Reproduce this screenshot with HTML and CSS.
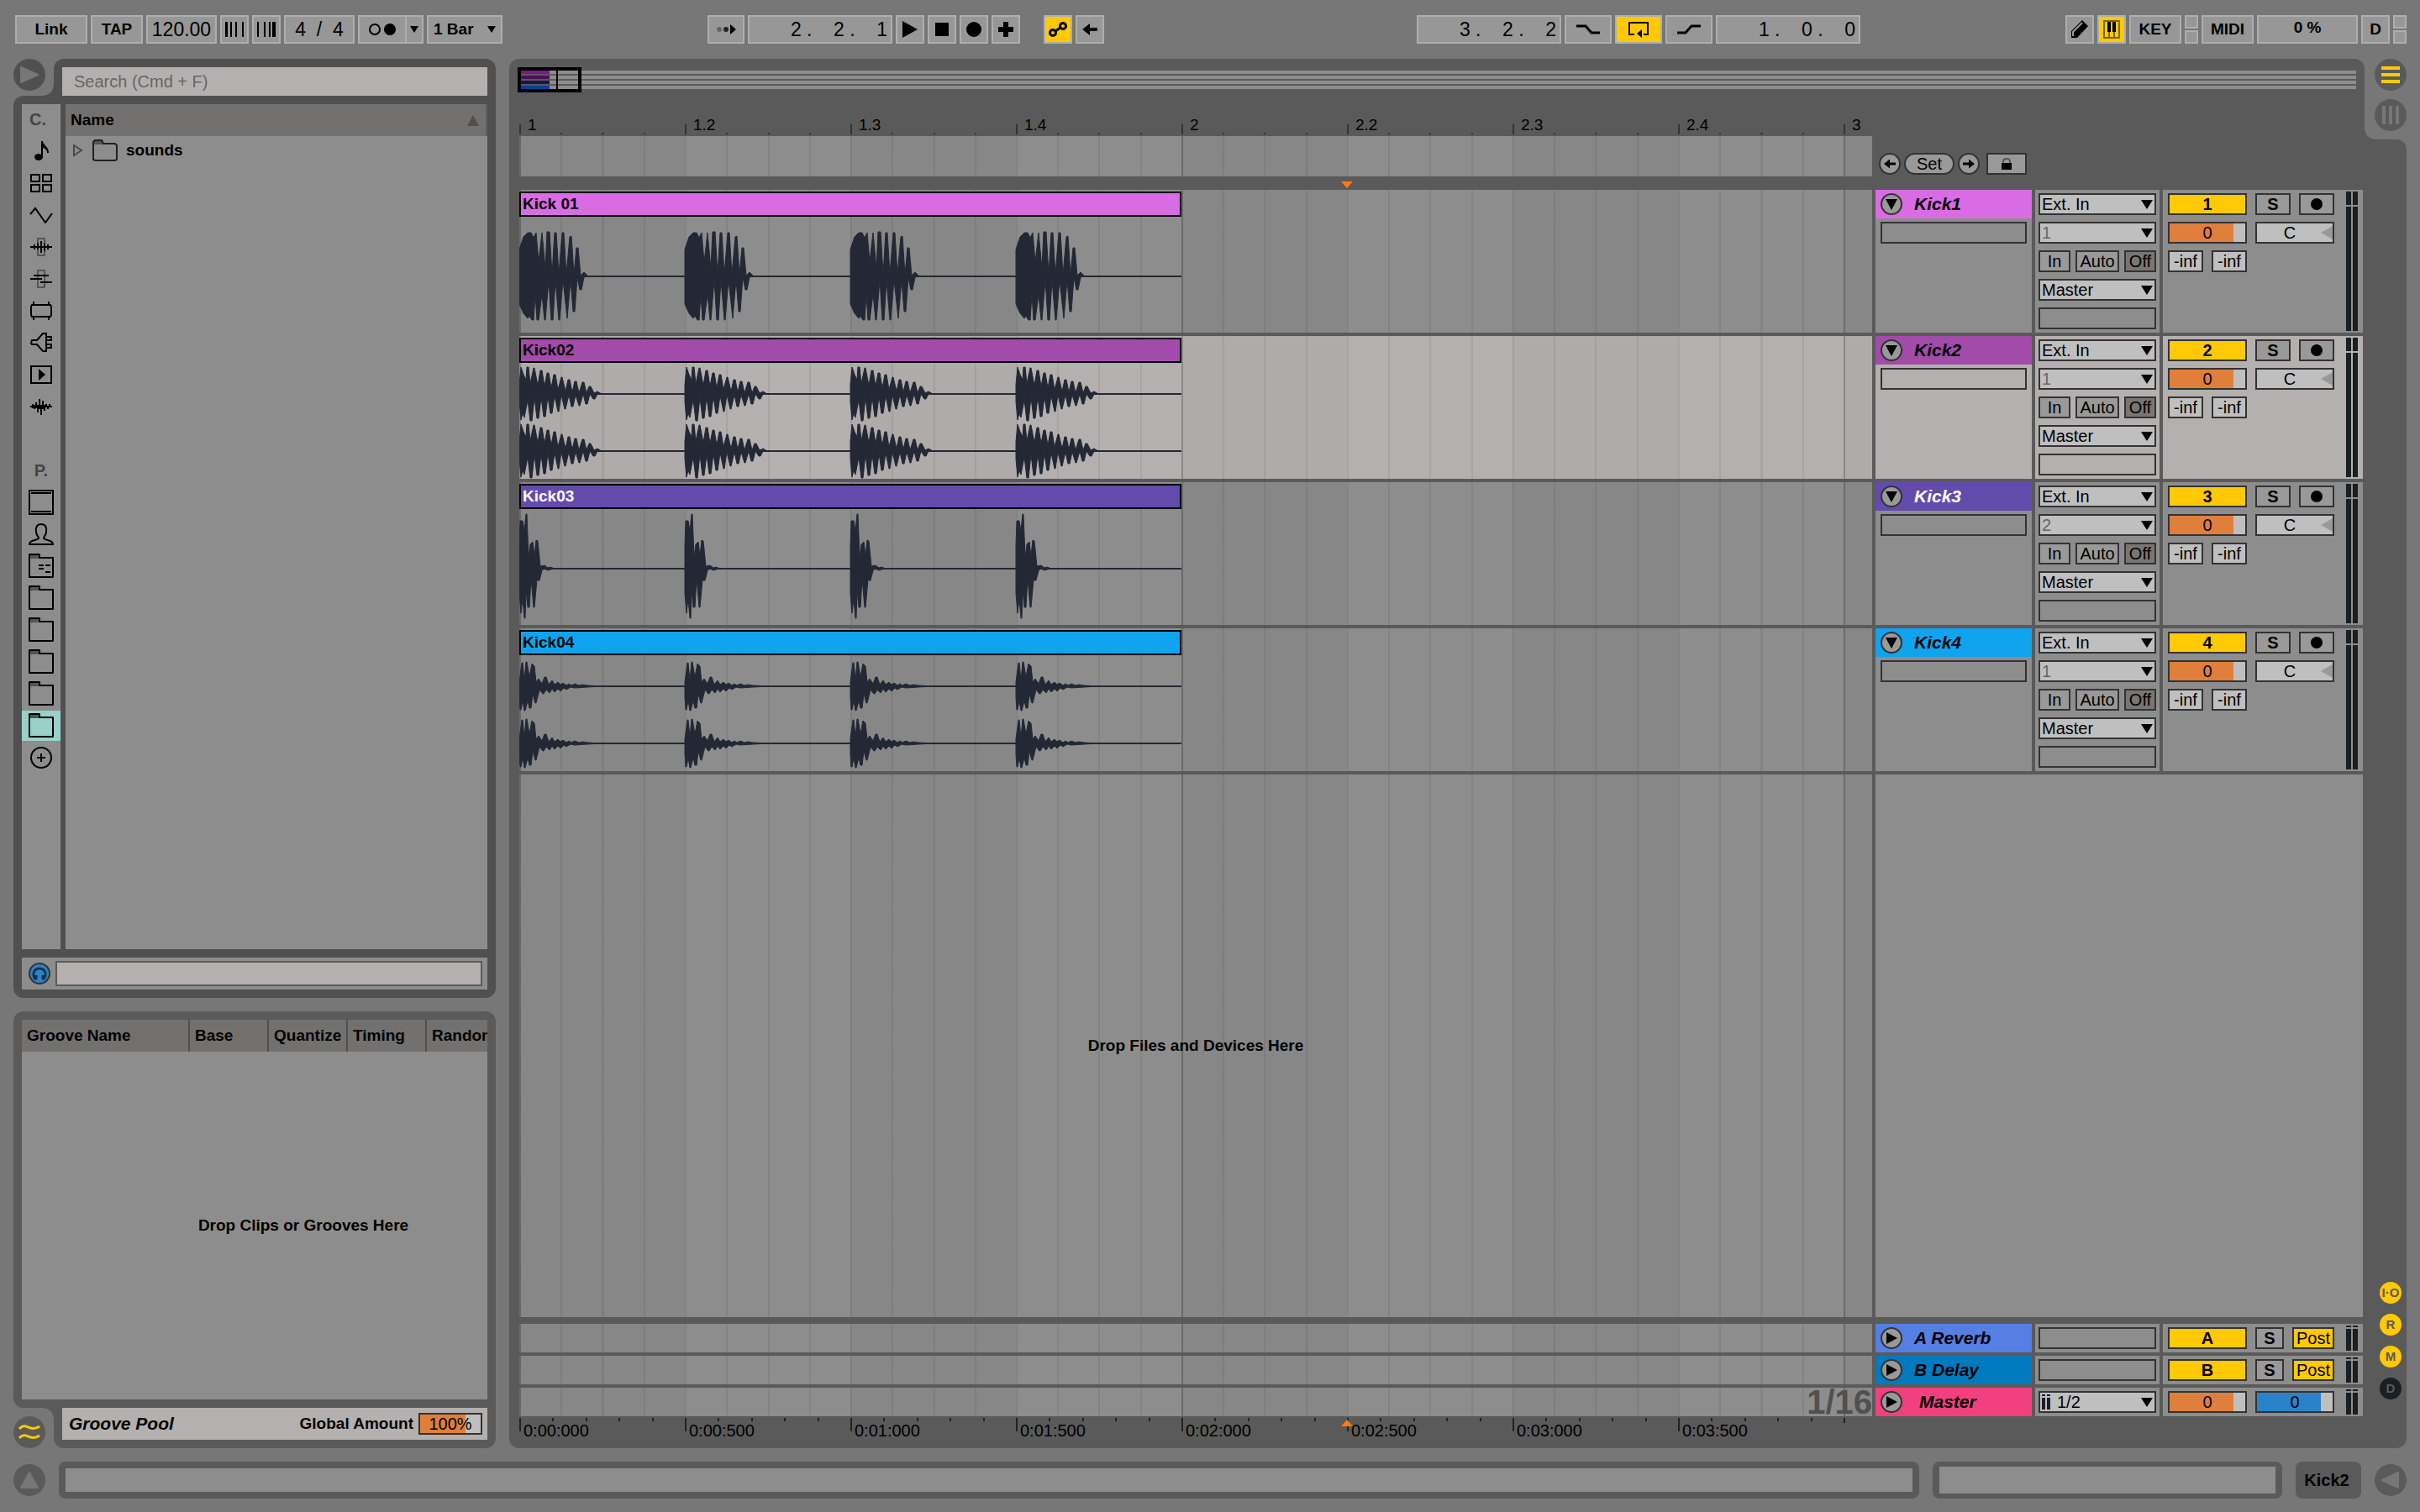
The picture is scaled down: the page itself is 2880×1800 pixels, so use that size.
FILE: index.html
```
<!DOCTYPE html>
<html lang="en">
<head>
    <meta charset="UTF-8">
    <meta name="viewport" content="width=device-width, initial-scale=1.0">
    <title>Arrangement</title>
    <link rel="stylesheet" href="styles.css">
</head>
<body>

<!-- Icons and waveforms -->
<svg class="defs" width="0" height="0" aria-hidden="true">
    <symbol id="folder" viewBox="0 0 30 30">
        <path d="M1 1h12v5H1z" fill="#555"/>
        <path d="M1 28V1h12v4h16v23z" fill="none" stroke="#000" stroke-width="2" stroke-linejoin="round"/>
    </symbol>
    <symbol id="left" viewBox="0 0 18 18">
        <path d="M0 9l9-7v5h9v4H9v5z"/>
    </symbol>
    <symbol id="kick1" viewBox="0 0 197 138" overflow="visible">
        <path d="M0 39L5 24 10 19 14 19 17 25 20 19 23 54 27 19 31 62 33 18 36 18 39 69 42 19 44 19 47 69 51 19 53 19 56 69 60 24 62 23 65 69 68 37 70 37 73 70 77 66 82 71 77 72 74 87 72 87 69 72 66 113 64 113 61 75 57 121 52 75 48 123 47 123 43 75 40 123 38 123 35 75 31 123 30 123 27 92 23 123 21 123 19 92 17 123 15 123 12 118 10 121 5 115 0 104z"/>
    </symbol>
    <symbol id="kick2" viewBox="0 0 197 68" overflow="visible">
        <path d="M0 26L2 5 5 14 8 20 9 5 11 5 13 25 17 6 18 6 22 27 25 9 27 9 30 28 33 12 35 12 38 30 41 14 43 14 46 32 50 17 51 17 55 34 58 20 60 20 63 35 66 22 68 22 71 36 75 23 77 23 80 36 83 28 85 28 89 36 93 34 98 37 93 37 90 43 88 43 84 37 81 49 79 49 76 37 72 51 71 51 67 38 64 52 62 52 59 38 55 55 54 55 50 38 47 58 46 58 42 39 39 60 37 60 34 40 31 64 29 64 26 41 23 66 21 66 18 41 15 69 13 69 10 44 6 65 4 60 2 68 0 46z"/>
    </symbol>
    <symbol id="kick3" viewBox="0 0 197 138" overflow="visible">
        <path d="M0 44L1 14 4 14 6 26 8 6 9 6 11 58 13 42 16 39 18 56 20 37 22 38 25 68 30 67 34 70 37 69 42 71 37 72 34 73 30 71 27 73 24 85 22 85 21 84 18 117 17 117 14 82 12 117 10 117 8 96 7 130 6 130 4 106 2 124 0 100z"/>
    </symbol>
    <symbol id="kick4" viewBox="0 0 197 68" overflow="visible">
        <path d="M0 32L3 9 4 9 6 30 8 8 9 8 12 26 15 10 18 13 20 32 23 28 27 34 30 26 32 26 35 35 39 30 42 35 46 32 49 35 52 33 56 36 59 34 62 36 66 34 71 36 75 35 81 36 99 37 81 38 66 39 61 38 56 41 53 39 49 43 46 40 42 44 39 40 36 45 32 41 29 46 28 46 24 41 20 57 19 57 16 46 14 63 12 63 10 54 7 66 6 66 4 54 2 65 1 65 0 50z"/>
    </symbol>
</svg>

<header class="toolbar">
    <div class="group">
        <button class="tool w86">Link</button>
        <button class="tool w62">TAP</button>
        <input class="tool w84 num center" value="120.00" aria-label="Tempo">
        <button class="tool" aria-label="Nudge down"><svg width="22" height="18"><path d="M0 0h3v18H0zM6 0h2v18H6zM12 0h2v18h-2zM20 0h2v18h-2z"/></svg></button>
        <button class="tool" aria-label="Nudge up"><svg width="22" height="18"><path d="M0 0h2v18H0zM8 0h2v18H8zM14 0h2v18h-2zM18 0h4v18h-4z"/></svg></button>
        <input class="tool w84 num center" value="4  /  4" aria-label="Time signature">
        <div class="split">
            <button class="tool" aria-label="Metronome"><svg width="34" height="18"><circle cx="8" cy="9" r="6" fill="none" stroke="#000" stroke-width="2"/><circle cx="26" cy="9" r="7"/></svg></button>
            <button class="tool w24" aria-label="Metronome settings"><svg width="10" height="8"><path d="M0 0h10L5 8z"/></svg></button>
        </div>
        <select class="tool w90 menu-small" aria-label="Quantization"><option>1 Bar</option></select>
    </div>

    <div class="group middle">
        <div class="group">
            <button class="tool w44" aria-label="Follow"><svg width="24" height="14"><circle cx="4" cy="7" r="3" fill="#666"/><circle cx="12" cy="7" r="3" fill="#222"/><path d="M17 1l7 6-7 6z"/></svg></button>
            <input class="tool w172 num" value="2 .    2 .    1" aria-label="Arrangement position">
            <button class="tool" aria-label="Play"><svg width="18" height="20"><path d="M0 0l18 10L0 20z"/></svg></button>
            <button class="tool" aria-label="Stop"><svg width="16" height="16"><path d="M0 0h16v16H0z"/></svg></button>
            <button class="tool" aria-label="Record"><svg width="18" height="18"><circle cx="9" cy="9" r="9"/></svg></button>
            <button class="tool" aria-label="Overdub"><svg width="18" height="18"><path d="M6 0h6v6h6v6h-6v6H6v-6H0V6h6z"/></svg></button>
            <button class="tool on automation" aria-label="Automation arm"><svg width="22" height="18" fill="none" stroke="#000" stroke-width="3"><circle cx="5" cy="13" r="3.500"/><circle cx="17" cy="5" r="3.500"/><path d="M8 11l6-4"/></svg></button>
            <button class="tool" aria-label="Re-enable automation"><svg width="18" height="18"><use href="#left"/></svg></button>
        </div>
        <div class="group">
            <input class="tool w172 num" value="3 .    2 .    2" aria-label="Loop start">
            <button class="tool w56" aria-label="Punch in"><svg width="28" height="12" fill="none" stroke="#000" stroke-width="3"><path d="M0 2h11l7 8h10"/></svg></button>
            <button class="tool w56 on" aria-label="Loop"><svg width="26" height="20"><path d="M8 16H2V2h22v14h-5" fill="none" stroke="#000" stroke-width="2"/><path d="M11 15l6-5v10z"/></svg></button>
            <button class="tool w56" aria-label="Punch out"><svg width="28" height="12" fill="none" stroke="#000" stroke-width="3"><path d="M0 10h10l7-8h11"/></svg></button>
            <input class="tool w172 num" value="1 .    0 .    0" aria-label="Loop length">
        </div>
    </div>

    <div class="group">
        <button class="tool" aria-label="Draw mode"><svg width="22" height="22"><path d="M1 21v-8L14 0l7 7L8 21z"/><path d="M3 19v-5L14 3" fill="none" stroke="#999" stroke-width="2"/></svg></button>
        <button class="tool on" aria-label="Computer keyboard"><svg width="20" height="22"><path d="M1 1h18v20H1zM7 12v9M13 12v9" fill="none" stroke="#7d6300" stroke-width="2"/><path d="M5 2h4v12H5zM11 2h4v12h-4z"/></svg></button>
        <button class="tool w62">KEY</button>
        <div class="leds"><i></i><i></i></div>
        <button class="tool w62">MIDI</button>
        <output class="tool w120 load">0 %</output>
        <button class="tool">D</button>
        <div class="leds"><i></i><i></i></div>
    </div>
</header>

<main class="workspace">
    <div class="side">
        <section class="browser">
            <div class="browser-head">
                <button class="round" aria-label="Hide browser"><svg width="24" height="24"><path d="M2 3v18l20-9z" fill="#777" stroke="#777" stroke-width="2" stroke-linejoin="round"/></svg></button>
                <div class="search-wrap"><input class="search" type="search" placeholder="Search (Cmd + F)" aria-label="Search"></div>
            </div>
            <div class="browser-body">
                <nav class="places">
                    <h2>C.</h2>
                    <button aria-label="Sounds"><svg width="18" height="24"><ellipse cx="6" cy="19" rx="5" ry="4"/><path d="M9 0h2c1 6 7 6 7 14h-2c0-5-3-5-5-6v11H9z"/></svg></button>
                    <button aria-label="Drums"><svg width="26" height="22" fill="none" stroke="#000" stroke-width="2"><path d="M1 1h10v8H1zM15 1h10v8H15zM1 13h10v8H1zM15 13h10v8H15z"/></svg></button>
                    <button aria-label="Instruments"><svg width="28" height="20" fill="none" stroke="#000" stroke-width="2"><path d="M1 9l6-7 12 17 8-11"/></svg></button>
                    <button aria-label="Audio effects"><svg width="26" height="22" fill="none" stroke="#000" stroke-width="2"><path d="M9 1h8v20H9z" stroke="#555"/><path d="M0 11h26M5 8v6M9 6v8M13 4v14M17 6v10M21 8v6"/></svg></button>
                    <button aria-label="MIDI effects"><svg width="26" height="22" fill="none" stroke="#000" stroke-width="2"><path d="M9 1h8v20H9z" stroke="#555"/><path d="M4 7h18M0 11h14M12 15h14"/></svg></button>
                    <button aria-label="Max for Live"><svg width="28" height="22" fill="none" stroke="#000" stroke-width="2"><path d="M3 4h22l1 2v10l-1 2H3l-1-2V6zM5 0v4M23 0v4M5 18v4M23 18v4"/></svg></button>
                    <button aria-label="Plug-ins"><svg width="28" height="24" fill="none" stroke="#000" stroke-width="2"><path d="M20 1h-4l-7 8H3l-1 3 1 2h6l7 8h4zM20 5h6v4h-6M20 14h6v4h-6"/></svg></button>
                    <button aria-label="Clips"><svg width="26" height="22"><path d="M1 1h24v20H1z" fill="none" stroke="#000" stroke-width="2"/><path d="M10 4l8 7-8 7z"/></svg></button>
                    <button aria-label="Samples"><svg width="26" height="20" fill="none" stroke="#000" stroke-width="2"><path d="M0 10h26M3 7v5M5 8v5M7 5v7M9 8v9M11 1v12M13 8v12M15 3v10M17 8v7M19 7v4M21 9v4M23 7v4"/></svg></button>
                    <h2 class="second">P.</h2>
                    <button aria-label="Packs"><svg width="30" height="30" fill="none" stroke="#000" stroke-width="2"><path d="M1 1h28v28H1zM3 4h24M3 26h24"/></svg></button>
                    <button aria-label="User library"><svg width="30" height="26" fill="none" stroke="#000" stroke-width="2"><path d="M15 1c-5 0-7 4-6 9 0 4 3 6 3 8-2 3-11 1-11 7h28c0-6-9-4-11-7 0-2 3-4 3-8 1-5-1-9-6-9z"/></svg></button>
                    <button aria-label="Current project"><svg width="30" height="30"><use href="#folder"/><path d="M12 14h6M20 14h6M12 18h6M20 22h6" stroke="#000" stroke-width="2"/></svg></button>
                    <button aria-label="Folder 1"><svg width="30" height="30"><use href="#folder"/></svg></button>
                    <button aria-label="Folder 2"><svg width="30" height="30"><use href="#folder"/></svg></button>
                    <button aria-label="Folder 3"><svg width="30" height="30"><use href="#folder"/></svg></button>
                    <button aria-label="Folder 4"><svg width="30" height="30"><use href="#folder"/></svg></button>
                    <button class="selected" aria-label="Folder 5"><svg width="30" height="30"><use href="#folder"/></svg></button>
                    <button aria-label="Add folder"><svg width="26" height="26" fill="none" stroke="#000" stroke-width="2"><circle cx="13" cy="13" r="12"/><path d="M8 13h10M13 8v10"/></svg></button>
                </nav>
                <div class="files">
                    <div class="files-head">Name <svg width="14" height="13"><path d="M7 0l7 13H0z" fill="#4f4f4f"/></svg></div>
                    <div class="file">
                        <svg width="14" height="16"><path d="M2 2v12l9-6z" fill="none" stroke="#4a4a4a" stroke-width="2"/></svg>
                        <svg width="30" height="26"><path d="M1 2h12v4H1z" fill="#555"/><path d="M1 24V3l2-2h8l2 4h14l2 2v17l-2 1H3z" fill="none" stroke="#222" stroke-width="2"/></svg>
                        <span>sounds</span>
                    </div>
                </div>
                <div class="preview">
                    <button aria-label="Preview"><svg width="26" height="26"><circle cx="13" cy="13" r="12" fill="#2a83c8" stroke="#333" stroke-width="2"/><path d="M9 20c-5-4-4-13 4-13s9 9 4 13M9 15v5M17 15v5" fill="none" stroke="#16324a" stroke-width="3"/></svg></button>
                    <input aria-label="Preview waveform" readonly>
                </div>
            </div>
        </section>

        <section class="groove">
            <div class="groove-body">
                <div class="groove-table">
                    <div class="groove-head">
                        <span class="wide">Groove Name</span><span>Base</span><span>Quantize</span><span>Timing</span><span>Random</span>
                    </div>
                    <p class="hint">Drop Clips or Grooves Here</p>
                </div>
            </div>
            <div class="groove-foot">
                <button class="round" aria-label="Groove pool"><svg width="26" height="20" fill="none" stroke="#ffc905" stroke-width="3"><path d="M1 6C9-3 14 11 25 3M1 17c8-9 13 5 24-3"/></svg></button>
                <div class="pool-wrap">
                    <div class="pool">
                        <h2>Groove Pool</h2>
                        <label for="amount">Global Amount</label>
                        <input id="amount" class="field volume" value="100%">
                    </div>
                </div>
            </div>
        </section>
    </div>

    <section class="arrange">
        <div class="arrange-top">
            <div class="arrange-head">
                <div class="overview">
                    <div class="line"><i class="c1"></i></div>
                    <div class="line"><i class="c2"></i></div>
                    <div class="line"><i class="c3"></i></div>
                    <div class="line"><i class="c4"></i></div>
                    <div class="frame"></div>
                </div>
                <div class="ruler">
                    <span>1</span><span>1.2</span><span>1.3</span><span>1.4</span><span>2</span><span>2.2</span><span>2.3</span><span>2.4</span><span class="last">3</span>
                </div>
            </div>
            <div class="views">
                <button class="round" aria-label="Arrangement view"><svg width="22" height="20"><path d="M0 0h22v4H0zM0 8h22v4H0zM0 16h22v4H0z" fill="#ffc905"/></svg></button>
                <button class="round" aria-label="Session view"><svg width="20" height="22"><path d="M0 0h4v22H0zM8 0h4v22H8zM16 0h4v22h-4z" fill="#777"/></svg></button>
            </div>
        </div>

        <div class="arrange-body">
            <div class="lanes">
                <div class="scrub-row">
                    <div class="lane"></div>
                    <div class="locators">
                        <button class="dot" aria-label="Previous locator"><svg width="14" height="14"><use href="#left"/></svg></button>
                        <button class="set">Set</button>
                        <button class="dot" aria-label="Next locator"><svg class="flip" width="14" height="14"><use href="#left"/></svg></button>
                        <button class="lock" aria-label="Lock envelopes"><svg width="12" height="14"><path d="M2 6V4q0-3 4-3t4 3v2" fill="none" stroke="#555" stroke-width="2"/><path d="M0 6h12v8H0z"/></svg></button>
                    </div>
                </div>
                <div class="marker-row"><svg class="marker" width="14" height="8"><path d="M0 0h14L7 8z" fill="#ff7a12"/></svg></div>

                <div class="track pink">
                    <div class="lane">
                        <div class="clip">
                            <h3>Kick 01</h3>
                            <svg class="wave" viewBox="0 0 788 138">
                                <use href="#kick1" width="197" height="138"/><use href="#kick1" x="197" width="197" height="138"/><use href="#kick1" x="394" width="197" height="138"/><use href="#kick1" x="591" width="197" height="138"/>
                                <path class="zero" d="M0 71h788"/>
                            </svg>
                        </div>
                    </div>
                    <div class="name">
                        <div class="title"><button class="dot" aria-label="Fold Kick1"><svg width="14" height="13"><path d="M0 0h14L7 13z"/></svg></button><span>Kick1</span></div>
                        <div class="slot"></div>
                    </div>
                    <div class="io">
                        <select class="field" aria-label="Kick1 input"><option>Ext. In</option></select>
                        <select class="field dim" aria-label="Kick1 channel"><option>1</option></select>
                        <div class="monitor"><button class="field">In</button><button class="field">Auto</button><button class="field pressed">Off</button></div>
                        <select class="field" aria-label="Kick1 output"><option>Master</option></select>
                        <div class="field empty"></div>
                    </div>
                    <div class="mixer">
                        <div class="controls">
                            <button class="field active">1</button>
                            <button class="field solo">S</button>
                            <button class="field" aria-label="Arm Kick1"><svg width="14" height="14"><circle cx="7" cy="7" r="7"/></svg></button>
                            <input class="field volume double" value="0" aria-label="Kick1 volume">
                            <input class="field pan double" value="C" aria-label="Kick1 pan">
                            <input class="field" value="-inf" aria-label="Kick1 send A">
                            <input class="field" value="-inf" aria-label="Kick1 send B">
                        </div>
                        <div class="meter"><i></i><i></i></div>
                    </div>
                </div>

                <div class="track purple current">
                    <div class="lane">
                        <div class="clip">
                            <h3>Kick02</h3>
                            <svg class="wave" viewBox="0 0 788 138">
                                <use href="#kick2" width="197" height="68"/><use href="#kick2" x="197" width="197" height="68"/><use href="#kick2" x="394" width="197" height="68"/><use href="#kick2" x="591" width="197" height="68"/>
                                <use href="#kick2" y="68" width="197" height="68"/><use href="#kick2" x="197" y="68" width="197" height="68"/><use href="#kick2" x="394" y="68" width="197" height="68"/><use href="#kick2" x="591" y="68" width="197" height="68"/>
                                <path class="zero" d="M0 37h788M0 105h788"/>
                            </svg>
                        </div>
                    </div>
                    <div class="name">
                        <div class="title"><button class="dot" aria-label="Fold Kick2"><svg width="14" height="13"><path d="M0 0h14L7 13z"/></svg></button><span>Kick2</span></div>
                        <div class="slot"></div>
                    </div>
                    <div class="io">
                        <select class="field" aria-label="Kick2 input"><option>Ext. In</option></select>
                        <select class="field dim" aria-label="Kick2 channel"><option>1</option></select>
                        <div class="monitor"><button class="field">In</button><button class="field">Auto</button><button class="field pressed">Off</button></div>
                        <select class="field" aria-label="Kick2 output"><option>Master</option></select>
                        <div class="field empty"></div>
                    </div>
                    <div class="mixer">
                        <div class="controls">
                            <button class="field active">2</button>
                            <button class="field solo">S</button>
                            <button class="field" aria-label="Arm Kick2"><svg width="14" height="14"><circle cx="7" cy="7" r="7"/></svg></button>
                            <input class="field volume double" value="0" aria-label="Kick2 volume">
                            <input class="field pan double" value="C" aria-label="Kick2 pan">
                            <input class="field" value="-inf" aria-label="Kick2 send A">
                            <input class="field" value="-inf" aria-label="Kick2 send B">
                        </div>
                        <div class="meter"><i></i><i></i></div>
                    </div>
                </div>

                <div class="track violet">
                    <div class="lane">
                        <div class="clip">
                            <h3>Kick03</h3>
                            <svg class="wave" viewBox="0 0 788 138">
                                <use href="#kick3" width="197" height="138"/><use href="#kick3" x="197" width="197" height="138"/><use href="#kick3" x="394" width="197" height="138"/><use href="#kick3" x="591" width="197" height="138"/>
                                <path class="zero" d="M0 71h788"/>
                            </svg>
                        </div>
                    </div>
                    <div class="name">
                        <div class="title"><button class="dot" aria-label="Fold Kick3"><svg width="14" height="13"><path d="M0 0h14L7 13z"/></svg></button><span>Kick3</span></div>
                        <div class="slot"></div>
                    </div>
                    <div class="io">
                        <select class="field" aria-label="Kick3 input"><option>Ext. In</option></select>
                        <select class="field dim" aria-label="Kick3 channel"><option>2</option></select>
                        <div class="monitor"><button class="field">In</button><button class="field">Auto</button><button class="field pressed">Off</button></div>
                        <select class="field" aria-label="Kick3 output"><option>Master</option></select>
                        <div class="field empty"></div>
                    </div>
                    <div class="mixer">
                        <div class="controls">
                            <button class="field active">3</button>
                            <button class="field solo">S</button>
                            <button class="field" aria-label="Arm Kick3"><svg width="14" height="14"><circle cx="7" cy="7" r="7"/></svg></button>
                            <input class="field volume double" value="0" aria-label="Kick3 volume">
                            <input class="field pan double" value="C" aria-label="Kick3 pan">
                            <input class="field" value="-inf" aria-label="Kick3 send A">
                            <input class="field" value="-inf" aria-label="Kick3 send B">
                        </div>
                        <div class="meter"><i></i><i></i></div>
                    </div>
                </div>

                <div class="track blue">
                    <div class="lane">
                        <div class="clip">
                            <h3>Kick04</h3>
                            <svg class="wave" viewBox="0 0 788 138">
                                <use href="#kick4" width="197" height="68"/><use href="#kick4" x="197" width="197" height="68"/><use href="#kick4" x="394" width="197" height="68"/><use href="#kick4" x="591" width="197" height="68"/>
                                <use href="#kick4" y="68" width="197" height="68"/><use href="#kick4" x="197" y="68" width="197" height="68"/><use href="#kick4" x="394" y="68" width="197" height="68"/><use href="#kick4" x="591" y="68" width="197" height="68"/>
                                <path class="zero" d="M0 37h788M0 105h788"/>
                            </svg>
                        </div>
                    </div>
                    <div class="name">
                        <div class="title"><button class="dot" aria-label="Fold Kick4"><svg width="14" height="13"><path d="M0 0h14L7 13z"/></svg></button><span>Kick4</span></div>
                        <div class="slot"></div>
                    </div>
                    <div class="io">
                        <select class="field" aria-label="Kick4 input"><option>Ext. In</option></select>
                        <select class="field dim" aria-label="Kick4 channel"><option>1</option></select>
                        <div class="monitor"><button class="field">In</button><button class="field">Auto</button><button class="field pressed">Off</button></div>
                        <select class="field" aria-label="Kick4 output"><option>Master</option></select>
                        <div class="field empty"></div>
                    </div>
                    <div class="mixer">
                        <div class="controls">
                            <button class="field active">4</button>
                            <button class="field solo">S</button>
                            <button class="field" aria-label="Arm Kick4"><svg width="14" height="14"><circle cx="7" cy="7" r="7"/></svg></button>
                            <input class="field volume double" value="0" aria-label="Kick4 volume">
                            <input class="field pan double" value="C" aria-label="Kick4 pan">
                            <input class="field" value="-inf" aria-label="Kick4 send A">
                            <input class="field" value="-inf" aria-label="Kick4 send B">
                        </div>
                        <div class="meter"><i></i><i></i></div>
                    </div>
                </div>

                <div class="drop-row">
                    <div class="lane"><p class="hint">Drop Files and Devices Here</p></div>
                    <div class="blank"></div>
                </div>

                <div class="track return reverb">
                    <div class="lane"></div>
                    <div class="name"><div class="title"><button class="dot" aria-label="Unfold A Reverb"><svg width="14" height="14"><path d="M1 0l13 7L1 14z"/></svg></button><span>A Reverb</span></div></div>
                    <div class="io"><div class="field empty"></div></div>
                    <div class="mixer">
                        <div class="controls"><button class="field active">A</button><button class="field solo">S</button><button class="field post">Post</button></div>
                        <div class="meter"><i></i><i></i></div>
                    </div>
                </div>
                <div class="track return delay">
                    <div class="lane"></div>
                    <div class="name"><div class="title"><button class="dot" aria-label="Unfold B Delay"><svg width="14" height="14"><path d="M1 0l13 7L1 14z"/></svg></button><span>B Delay</span></div></div>
                    <div class="io"><div class="field empty"></div></div>
                    <div class="mixer">
                        <div class="controls"><button class="field active">B</button><button class="field solo">S</button><button class="field post">Post</button></div>
                        <div class="meter"><i></i><i></i></div>
                    </div>
                </div>
                <div class="track return master">
                    <div class="lane"><span class="grid-size">1/16</span></div>
                    <div class="name"><div class="title"><button class="dot" aria-label="Unfold Master"><svg width="14" height="14"><path d="M1 0l13 7L1 14z"/></svg></button><span>Master</span></div></div>
                    <div class="io"><select class="field out" aria-label="Master output"><option>1/2</option></select></div>
                    <div class="mixer">
                        <div class="controls"><input class="field volume" value="0" aria-label="Master volume"><input class="field cue" value="0" aria-label="Cue volume"></div>
                        <div class="meter"><i></i><i></i></div>
                    </div>
                </div>

                <div class="time-ruler">
                    <span>0:00:000</span><span>0:00:500</span><span>0:01:000</span><span>0:01:500</span><span>0:02:000</span><span>0:02:500</span><span>0:03:000</span><span>0:03:500</span><span class="end"></span>
                    <svg class="marker" width="14" height="8"><path d="M0 8h14L7 0z" fill="#ff7a12"/></svg>
                </div>
            </div>

            <div class="toggles">
                <button>I·O</button>
                <button>R</button>
                <button>M</button>
                <button class="off">D</button>
            </div>
        </div>
    </section>
</main>

<footer class="status">
    <button class="round" aria-label="Show info"><svg width="24" height="24"><path d="M12 3L2 21h20z" fill="#777" stroke="#777" stroke-width="2" stroke-linejoin="round"/></svg></button>
    <div class="bar info"></div>
    <div class="bar overview-bar"></div>
    <button class="device">Kick2</button>
    <button class="round" aria-label="Show detail view"><svg width="24" height="24"><path d="M21 3v18L2 12z" fill="#777" stroke="#777" stroke-width="2" stroke-linejoin="round"/></svg></button>
</footer>

</body>
</html>
```
FILE: styles.css
```
:root {
    --beat: 197px;
    --bg: #777;
    --panel: #5a5a5a;
    --browser: #505050;
    --surface: #8d8d8d;
    --surface-alt: #878787;
    --light: #b4b0af;
    --yellow: #ffc905;
    --wave: #242834;
}

* {
    box-sizing: border-box;
}

body {
    margin: 0;
    height: 100vh;
    display: flex;
    flex-direction: column;
    background: var(--bg);
    color: #000;
    font: 19px/22px "Liberation Sans", Arial, sans-serif;
    overflow: hidden;
}

button, input, select {
    margin: 0;
    padding: 0;
    border: 0;
    border-radius: 0;
    background: none;
    color: inherit;
    font: inherit;
    appearance: none;
    outline: 0;
    min-width: 0;
}

button {
    display: flex;
    align-items: center;
    justify-content: center;
    flex-shrink: 0;
}

h2, h3, p {
    margin: 0;
    font-size: 19px;
}

svg {
    display: block;
    flex-shrink: 0;
}

.defs {
    position: absolute;
}

/* Toolbar */
.toolbar {
    display: flex;
    justify-content: space-between;
    padding: 18px 16px 18px 18px;
}

.group {
    display: flex;
    gap: 4px;
}

.middle {
    gap: 372px;
}

.tool {
    width: 34px;
    height: 34px;
    border: 2px solid #aeaeae;
    background-color: #979797;
    font-weight: bold;
}

.tool.on {
    background-color: var(--yellow);
}

.w24 { width: 24px; }
.w44 { width: 44px; }
.w56 { width: 56px; }
.w62 { width: 62px; }
.w84 { width: 84px; }
.w86 { width: 86px; }
.w90 { width: 90px; }
.w120 { width: 120px; }
.w172 { width: 172px; }

.num {
    padding-right: 4px;
    font-size: 23px;
    font-weight: normal;
    text-align: right;
}

.num.center {
    padding: 0;
    text-align: center;
}

.split {
    display: flex;
}

.split .tool:first-child {
    width: 58px;
}

.split .tool:last-child {
    width: 22px;
    margin-left: -2px;
}

.menu-small {
    padding-left: 6px;
    background-image: url("data:image/svg+xml,%3Csvg xmlns='http://www.w3.org/2000/svg' width='10' height='8'%3E%3Cpath d='M0 0h10L5 8z'/%3E%3C/svg%3E");
    background-repeat: no-repeat;
    background-position: right 6px center;
}

.automation {
    margin-left: 24px;
}

.leds {
    display: flex;
    flex-direction: column;
    gap: 2px;
}

.leds i {
    width: 16px;
    height: 16px;
    border: 2px solid #aeaeae;
    background: #979797;
}

.load {
    line-height: 26px;
    text-align: center;
}

/* Layout */
.workspace {
    flex: 1;
    min-height: 0;
    display: flex;
    gap: 16px;
    padding: 0 16px;
}

.side {
    width: 574px;
    flex-shrink: 0;
    display: flex;
    flex-direction: column;
    gap: 16px;
}

.round {
    width: 38px;
    height: 38px;
    border-radius: 50%;
    background: var(--panel);
}

/* Browser */
.browser {
    flex: 1;
    display: flex;
    flex-direction: column;
}

.browser-head {
    display: flex;
    height: 44px;
}

.browser-head .round {
    margin-right: 10px;
    background: var(--browser);
}

.search-wrap {
    position: relative;
    flex: 1;
    display: flex;
    padding: 10px 10px 0;
    border-radius: 12px 12px 0 0;
    background: var(--browser);
}

/* Rounded inner corners beside the round buttons */
.search-wrap::before, .pool-wrap::before, .views::before {
    content: "";
    position: absolute;
    width: 12px;
    height: 12px;
}

.search-wrap::before {
    left: -12px;
    bottom: 0;
    background: radial-gradient(circle at 0 0, transparent 11px, var(--browser) 12px);
}

.pool-wrap::before {
    left: -12px;
    top: 0;
    background: radial-gradient(circle at 0 100%, transparent 11px, var(--panel) 12px);
}

.views::before {
    left: 0;
    bottom: 0;
    background: radial-gradient(circle at 100% 0, transparent 11px, var(--panel) 12px);
}

.search {
    flex: 1;
    padding-left: 14px;
    background: var(--light);
    font-size: 20px;
}

.search::placeholder {
    color: #666;
    opacity: 1;
}

.browser-body {
    flex: 1;
    display: grid;
    grid-template: 1fr 38px / 46px 1fr;
    gap: 10px 6px;
    padding: 10px;
    border-radius: 12px 0 12px 12px;
    background: var(--browser);
}

.places {
    display: flex;
    flex-direction: column;
    gap: 2px;
    background: var(--surface);
}

.places h2 {
    height: 36px;
    padding-right: 8px;
    color: #444;
    font-size: 20px;
    line-height: 36px;
    text-align: center;
}

.places .second {
    margin-top: 38px;
    padding-right: 0;
}

.places button {
    height: 36px;
}

.places .selected {
    background: #99d1c8;
}

.files {
    background: var(--surface);
    font-weight: bold;
}

.files-head {
    display: flex;
    align-items: center;
    justify-content: space-between;
    height: 38px;
    padding: 0 8px 0 6px;
    border-right: 2px solid #5f5e5c;
    background: #72716f;
}

.file {
    display: flex;
    align-items: center;
    gap: 10px;
    height: 34px;
    padding-left: 8px;
}

.preview {
    grid-column: 1 / -1;
    display: flex;
    align-items: center;
    gap: 6px;
    padding: 4px 6px 4px 8px;
    background: var(--surface);
}

.preview input {
    flex: 1;
    height: 30px;
    border: 2px solid #5a5a5a;
    background: var(--light);
}

/* Groove pool */
.groove {
    display: flex;
    flex-direction: column;
    height: 520px;
}

.groove-body {
    flex: 1;
    display: flex;
    padding: 10px;
    border-radius: 12px 12px 0 12px;
    background: var(--panel);
    overflow: hidden;
}

.groove-table {
    flex: 1;
    display: flex;
    flex-direction: column;
    background: var(--surface);
    overflow: hidden;
}

.groove-head {
    display: flex;
    width: 670px;
    height: 38px;
    background: #72716f;
    font-weight: bold;
    line-height: 38px;
}

.groove-head span {
    width: 94px;
    flex-shrink: 0;
    padding-left: 6px;
    border-right: 2px solid #505050;
}

.groove-head .wide {
    width: 200px;
}

.hint {
    font-weight: bold;
    text-align: center;
    margin: auto;
}

.groove-table .hint {
    width: 670px;
    margin: auto 0;
}

.groove-foot {
    display: flex;
    align-items: flex-end;
    height: 48px;
}

.groove-foot .round {
    margin-right: 10px;
}

.pool-wrap {
    position: relative;
    flex: 1;
    height: 48px;
    padding: 0 10px 10px;
    border-radius: 0 0 12px 12px;
    background: var(--panel);
}

.pool {
    display: flex;
    align-items: center;
    height: 38px;
    padding: 0 6px 0 8px;
    background: var(--light);
}

.pool h2 {
    flex: 1;
    font-size: 21px;
    font-style: italic;
}

.pool label {
    margin-right: 6px;
    font-weight: bold;
}

.pool .field {
    width: 76px;
}

/* Shared fields */
.field {
    width: 100%;
    height: 26px;
    border: 2px solid #333;
    background-color: #bfbfbf;
    font-size: 20px;
    line-height: 22px;
    text-align: center;
}

button.field {
    background-color: #999;
}

button.field.active, button.field.post {
    background-color: var(--yellow);
}

button.field.active, button.field.solo {
    font-weight: bold;
}

button.field.pressed {
    background-color: #797573;
}

select.field {
    padding-left: 2px;
    text-align: left;
    background-image: url("data:image/svg+xml,%3Csvg xmlns='http://www.w3.org/2000/svg' width='14' height='11'%3E%3Cpath d='M0 0h14L7 11z'/%3E%3C/svg%3E");
    background-repeat: no-repeat;
    background-position: right 2px center;
}

.field.dim {
    color: #666;
}

.field.empty {
    background: none;
}

.volume {
    background-image: linear-gradient(90deg, #e07e3c 84%, transparent 84%);
}

.pool .volume {
    background-image: linear-gradient(90deg, #e07e3c 75%, transparent 75%);
}

.cue {
    background-image: linear-gradient(90deg, #2a83c8 84%, transparent 84%);
}

.pan {
    padding-right: 12px;
    background-image: url("data:image/svg+xml,%3Csvg xmlns='http://www.w3.org/2000/svg' width='14' height='16'%3E%3Cpath d='M14 0v16L0 8z' fill='%23999'/%3E%3C/svg%3E");
    background-repeat: no-repeat;
    background-position: right center;
}

.dot {
    width: 26px;
    height: 26px;
    border: 2px solid #333;
    border-radius: 50%;
    background: #999;
}

/* Arrangement */
.arrange {
    flex: 1;
    min-width: 0;
    display: flex;
    flex-direction: column;
}

.arrange-top {
    display: flex;
    height: 96px;
}

.arrange-head {
    flex: 1;
    min-width: 0;
    padding: 14px 10px 0 12px;
    border-radius: 12px 12px 0 0;
    background: var(--panel);
}

.views {
    position: relative;
    display: flex;
    flex-direction: column;
    gap: 10px;
    width: 50px;
    padding-left: 12px;
}

.overview {
    position: relative;
    display: flex;
    flex-direction: column;
    gap: 2px;
}

.overview .line {
    height: 4px;
    background: var(--surface);
}

.overview i {
    display: block;
    width: 36px;
    height: 4px;
}

.c1 { background: #7a1a86; }
.c2 { background: #471352; }
.c3 { background: #1e1152; }
.c4 { background: #00438f; }

/* Visible range, drawn over the overview lines */
.frame {
    position: absolute;
    left: -2px;
    top: -4px;
    width: 76px;
    height: 30px;
    border: 4px solid #000;
    background: linear-gradient(#000, #000) 42px 0 / 2px 100% no-repeat;
}

.ruler, .time-ruler {
    display: flex;
}

.ruler span, .time-ruler span {
    width: var(--beat);
    flex-shrink: 0;
}

.ruler {
    height: 22px;
    margin-top: 32px;
    margin-right: 576px;
    background:
        repeating-linear-gradient(90deg, #333 0 2px, transparent 2px var(--beat)) 0 10px / 100% 12px no-repeat,
        repeating-linear-gradient(90deg, #333 0 2px, transparent 2px calc(var(--beat) / 4)) 0 20px / 100% 2px no-repeat;
}

.ruler span {
    padding-left: 10px;
}

.ruler .last {
    width: auto;
}

.arrange-body {
    flex: 1;
    min-height: 0;
    display: flex;
    border-radius: 0 12px 12px 12px;
    background: var(--panel);
}

.lanes {
    flex: 1;
    min-width: 0;
    display: flex;
    flex-direction: column;
    padding-left: 12px;
}

.lane {
    --a: var(--surface-alt);
    --b: var(--surface);
    min-width: 0;
    background:
        repeating-linear-gradient(90deg, #00000026 0 2px, transparent 2px calc(var(--beat) * 4)),
        repeating-linear-gradient(90deg, #00000012 0 2px, transparent 2px calc(var(--beat) / 4)),
        repeating-linear-gradient(90deg, var(--a) 0 var(--beat), var(--b) var(--beat) calc(var(--beat) * 2));
}

.scrub-row, .drop-row {
    display: grid;
    grid-template-columns: 1fr 580px;
    gap: 4px;
}

.scrub-row {
    height: 48px;
    margin-top: -4px;
}

.locators {
    display: flex;
    align-items: flex-end;
    gap: 4px;
    padding: 0 0 2px 4px;
}

.flip {
    transform: scaleX(-1);
}

.set {
    width: 60px;
    height: 26px;
    border: 2px solid #333;
    border-radius: 13px;
    background: #999;
    font-size: 20px;
}

.lock {
    width: 48px;
    height: 26px;
    margin-left: 4px;
    border: 2px solid #333;
    background: #999;
}

.marker-row {
    position: relative;
    height: 16px;
}

.marker {
    position: absolute;
    left: calc(var(--beat) * 5 - 7px);
    top: 6px;
}

.track {
    --color: #d96ce4;
    display: grid;
    grid-template-columns: 1fr 186px 148px 238px;
    gap: 4px;
    height: 170px;
    margin-bottom: 4px;
}

.pink { --color: #d96ce4; }
.purple { --color: #a24bab; }
.violet { --color: #634bab; }
.blue { --color: #10a4ee; }
.reverb { --color: #557fe2; }
.delay { --color: #007abe; }
.master { --color: #f2407f; }

.name, .io, .mixer, .blank {
    background: var(--surface);
}

.current .name, .current .io, .current .mixer {
    background: var(--light);
}

.current .lane {
    --a: #afabaa;
    --b: #b4b0af;
}

.clip {
    width: calc(var(--beat) * 4);
    padding-top: 2px;
}

.clip h3 {
    height: 30px;
    padding-left: 2px;
    border: 2px solid #000;
    background: var(--color);
    line-height: 26px;
}

.violet h3, .violet .title span {
    color: #fff;
}

.wave {
    width: 100%;
    height: 138px;
    fill: var(--wave);
    stroke: var(--wave);
    stroke-width: 1px;
    stroke-linejoin: round;
}

.zero {
    stroke-width: 2px;
}

.title {
    display: flex;
    align-items: center;
    gap: 14px;
    height: 34px;
    padding-left: 6px;
    background: var(--color);
    font-size: 21px;
    font-weight: bold;
    font-style: italic;
}

.slot {
    height: 26px;
    margin: 4px 6px;
    border: 2px solid #333;
}

.io {
    display: flex;
    flex-direction: column;
    gap: 8px;
    padding: 4px;
}

.monitor {
    display: flex;
    gap: 6px;
}

.monitor .field {
    flex: 1;
}

.monitor .field:nth-child(2) {
    flex: none;
    width: 52px;
}

.mixer {
    display: flex;
    justify-content: space-between;
    padding: 0 6px;
}

.controls {
    display: grid;
    grid-template-columns: repeat(4, 42px);
    gap: 8px 10px;
    align-content: start;
    padding: 4px 0;
}

.controls .active, .controls .double {
    grid-column: span 2;
}

.meter {
    --notch: 16px;
    display: flex;
    gap: 2px;
    padding: 2px 0;
}

.meter i {
    width: 6px;
    background: linear-gradient(#1a1f24 var(--notch), transparent var(--notch) calc(var(--notch) + 2px), #1a1f24 calc(var(--notch) + 2px));
}

.drop-row {
    flex: 1;
    min-height: 0;
    margin-bottom: 8px;
}

.drop-row .lane {
    display: flex;
}

.return {
    height: 34px;
}

.return .controls {
    display: flex;
}

.return .controls .field {
    width: 94px;
}

.return .controls .solo {
    width: 34px;
}

.return .controls .post {
    width: 50px;
}

.return .meter {
    --notch: 2px;
}

.master {
    margin-bottom: 0;
}

.master .title span {
    padding-left: 6px;
}

.master .lane {
    display: flex;
    justify-content: flex-end;
    align-items: center;
}

.grid-size {
    color: #505050;
    font-size: 40px;
    font-weight: bold;
    line-height: 34px;
}

select.out {
    padding-left: 20px;
    background-image:
        url("data:image/svg+xml,%3Csvg xmlns='http://www.w3.org/2000/svg' width='14' height='11'%3E%3Cpath d='M0 0h14L7 11z'/%3E%3C/svg%3E"),
        url("data:image/svg+xml,%3Csvg xmlns='http://www.w3.org/2000/svg' width='10' height='18'%3E%3Cpath d='M0 0h4v2H0zM6 0h4v2H6zM0 4h4v14H0zM6 4h4v14H6z' fill='%231a1f24'/%3E%3C/svg%3E");
    background-position: right 2px center, 2px center;
}

.time-ruler {
    position: relative;
    height: 36px;
    margin-top: 2px;
    margin-right: 584px;
    overflow: hidden;
    font-size: 20px;
    background: repeating-linear-gradient(90deg, #222 0 2px, transparent 2px calc(var(--beat) / 5)) 0 0 / 100% 4px no-repeat;
}

.time-ruler span {
    height: 16px;
    padding: 4px 0 0 3px;
    border-left: 2px solid #222;
}

.time-ruler .end {
    height: 6px;
    padding: 0;
}

.time-ruler .marker {
    top: 2px;
}

.toggles {
    width: 52px;
    display: flex;
    flex-direction: column;
    justify-content: flex-end;
    gap: 12px;
    padding: 0 6px 58px 20px;
}

.toggles button {
    height: 26px;
    border-radius: 50%;
    background: var(--yellow);
    color: #5a5a5a;
    font-size: 15px;
    font-weight: bold;
}

.toggles .off {
    background: #1a1f24;
}

/* Status bar */
.status {
    display: flex;
    align-items: center;
    gap: 16px;
    padding: 16px;
}

.bar, .device {
    height: 44px;
    border-radius: 8px;
    background: var(--panel);
}

.bar {
    border: 8px solid var(--panel);
    background: var(--surface);
}

.info {
    flex: 1;
}

.overview-bar {
    width: 416px;
    border-width: 6px 8px;
}

.device {
    width: 78px;
    padding-right: 4px;
    font-size: 20px;
    font-weight: bold;
}
```
